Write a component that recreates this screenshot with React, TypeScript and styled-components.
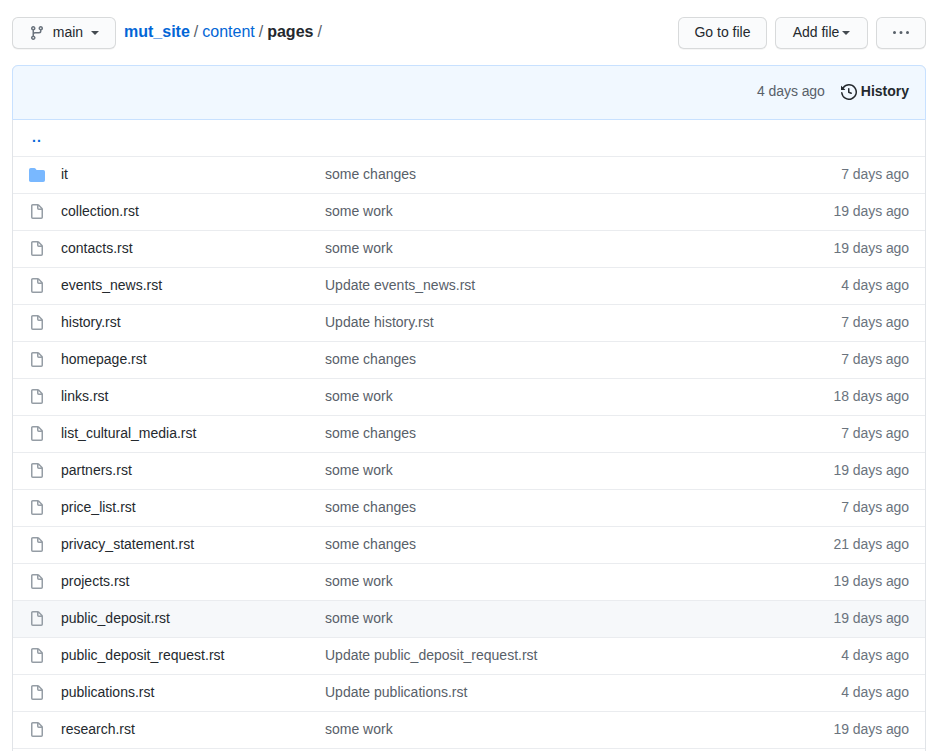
import React from "react";
import styled, { createGlobalStyle } from "styled-components";

const GlobalStyle = createGlobalStyle`
  * { box-sizing: border-box; }
  body {
    margin: 0;
    background: #fff;
    color: #24292e;
    font: 14px/20px "Liberation Sans", Arial, sans-serif;
    overflow: hidden;
  }
`;

const Page = styled.main`
  width: 938px;
  height: 751px;
  padding: 17px 12px 0;
  overflow: hidden;
`;

const Toolbar = styled.div`
  display: flex;
  height: 32px;
  margin-bottom: 16px;
`;

const Button = styled.button<{ $width: number }>`
  display: flex;
  align-items: center;
  justify-content: center;
  width: ${(p) => p.$width}px;
  height: 32px;
  padding: 0 0 2px;
  font: inherit;
  color: #24292e;
  background: #fafbfc;
  border: 1px solid rgba(27, 31, 35, 0.15);
  border-radius: 6px;
  box-shadow: 0 1px 0 rgba(27, 31, 35, 0.04), inset 0 1px 0 rgba(255, 255, 255, 0.25);
`;

const Actions = styled.div`
  display: flex;
  gap: 8px;
  margin-left: auto;
`;

const Caret = styled.span<{ $gap: number }>`
  margin: 2px 0 0 ${(p) => p.$gap}px;
  border: 4px solid transparent;
  border-top-color: #444a50;
  border-bottom-width: 0;
`;

const Breadcrumb = styled.nav`
  margin: 3px 0 0 8px;
  font-size: 16px;
  line-height: 24px;
  white-space: pre;
`;

const Link = styled.a<{ $bold?: boolean }>`
  color: #0366d6;
  font-weight: ${(p) => (p.$bold ? 700 : 400)};
`;

const Separator = styled.span`
  margin: 0 4px;
  color: #586069;
`;

const Icon = styled.svg<{ $color: string }>`
  display: block;
  flex: none;
  fill: ${(p) => p.$color};
`;

const BranchIcon = styled(Icon)`
  margin: 2px 8px 0 0;
`;

const DotsIcon = styled(Icon)`
  margin-top: 2px;
`;

const FileBox = styled.section`
  border: 1px solid #e1e4e8;
  border-top: 0;
  border-radius: 6px;
`;

const CommitBar = styled.header`
  display: flex;
  align-items: center;
  justify-content: flex-end;
  height: 55px;
  margin: 0 -1px;
  padding: 0 16px 4px;
  color: #586069;
  background: #f1f8ff;
  border: 1px solid #c8e1ff;
  border-radius: 6px 6px 0 0;
`;

const CommitAge = styled.time`
  letter-spacing: -0.08px;
`;

const History = styled.a`
  display: flex;
  align-items: center;
  gap: 4px;
  margin-left: 16px;
  color: #24292e;
  font-weight: 700;
`;

const HistoryIcon = styled(Icon)`
  margin-top: 2px;
`;

const ParentRow = styled.div`
  height: 36px;
  padding: 7px 19px;
  color: #0366d6;
  font-weight: 700;
  letter-spacing: 1px;
`;

const Row = styled.div<{ $active?: boolean }>`
  display: grid;
  grid-template-columns: 16px 248px 1fr auto;
  column-gap: 16px;
  height: 37px;
  padding: 7px 16px 0;
  border-top: 1px solid #eaecef;
  background: ${(p) => (p.$active ? "#f6f8fa" : "#fff")};
`;

const RowIcon = styled(Icon)`
  margin-top: 3px;
`;

const Name = styled.span`
  color: #24292e;
`;

const Message = styled.span`
  color: #586069;
`;

const Age = styled.time`
  color: #6a737d;
  letter-spacing: -0.08px;
`;

const paths = {
  branch:
    "M11.75 2.5a.75.75 0 100 1.5.75.75 0 000-1.5zm-2.25.75a2.25 2.25 0 113 2.122V6A2.5 2.5 0 0110 8.5H6a1 1 0 00-1 1v1.128a2.251 2.251 0 11-1.5 0V5.372a2.25 2.25 0 111.5 0v1.836A2.492 2.492 0 016 7h4a1 1 0 001-1v-.628A2.25 2.25 0 019.5 3.25zM4.25 12a.75.75 0 100 1.5.75.75 0 000-1.5zM3.5 3.25a.75.75 0 111.5 0 .75.75 0 01-1.5 0z",
  file:
    "M3.75 1.5a.25.25 0 00-.25.25v11.5c0 .138.112.25.25.25h8.5a.25.25 0 00.25-.25V6H9.75A1.75 1.75 0 018 4.25V1.5H3.75zm5.75.56v2.19c0 .138.112.25.25.25h2.19L9.5 2.06zM2 1.75C2 .784 2.784 0 3.75 0h5.086c.464 0 .909.184 1.237.513l3.414 3.414c.329.328.513.773.513 1.237v8.086A1.75 1.75 0 0112.25 15h-8.5A1.75 1.75 0 012 13.25V1.75z",
  folder:
    "M1.75 1A1.75 1.75 0 000 2.75v10.5C0 14.216.784 15 1.75 15h12.5A1.75 1.75 0 0016 13.25v-8.5A1.75 1.75 0 0014.25 3h-6.5a.25.25 0 01-.2-.1l-.9-1.2c-.33-.44-.85-.7-1.4-.7h-3.5z",
  history:
    "M1.643 3.143L.427 1.927A.25.25 0 000 2.104V5.75c0 .138.112.25.25.25h3.646a.25.25 0 00.177-.427L2.715 4.215a6.5 6.5 0 11-1.18 4.458.75.75 0 10-1.493.154 8.001 8.001 0 101.6-5.684zM7.75 4a.75.75 0 01.75.75v2.992l2.028.812a.75.75 0 01-.557 1.392l-2.5-1A.75.75 0 017 8.25v-3.5A.75.75 0 017.75 4z",
  dots:
    "M8 9a1.5 1.5 0 100-3 1.5 1.5 0 000 3zM1.5 9a1.5 1.5 0 100-3 1.5 1.5 0 000 3zm13 0a1.5 1.5 0 100-3 1.5 1.5 0 000 3z",
};

type Entry = { name: string; message: string; age: string; folder?: boolean; active?: boolean };

const entries: Entry[] = [
  { name: "it", message: "some changes", age: "7 days ago", folder: true },
  { name: "collection.rst", message: "some work", age: "19 days ago" },
  { name: "contacts.rst", message: "some work", age: "19 days ago" },
  { name: "events_news.rst", message: "Update events_news.rst", age: "4 days ago" },
  { name: "history.rst", message: "Update history.rst", age: "7 days ago" },
  { name: "homepage.rst", message: "some changes", age: "7 days ago" },
  { name: "links.rst", message: "some work", age: "18 days ago" },
  { name: "list_cultural_media.rst", message: "some changes", age: "7 days ago" },
  { name: "partners.rst", message: "some work", age: "19 days ago" },
  { name: "price_list.rst", message: "some changes", age: "7 days ago" },
  { name: "privacy_statement.rst", message: "some changes", age: "21 days ago" },
  { name: "projects.rst", message: "some work", age: "19 days ago" },
  { name: "public_deposit.rst", message: "some work", age: "19 days ago", active: true },
  { name: "public_deposit_request.rst", message: "Update public_deposit_request.rst", age: "4 days ago" },
  { name: "publications.rst", message: "Update publications.rst", age: "4 days ago" },
  { name: "research.rst", message: "some work", age: "19 days ago" },
];

export default function App() {
  return (
    <Page>
      <GlobalStyle />
      <Toolbar>
        <Button $width={104}>
          <BranchIcon $color="#6a737d" width="16" height="16" viewBox="0 0 16 16">
            <path fillRule="evenodd" d={paths.branch} />
          </BranchIcon>
          main
          <Caret $gap={8} />
        </Button>
        <Breadcrumb>
          <Link $bold>mut_site</Link>
          <Separator>/</Separator>
          <Link>content</Link>
          <Separator>/</Separator>
          <strong>pages</strong>
          <Separator>/</Separator>
        </Breadcrumb>
        <Actions>
          <Button $width={89}>Go to file</Button>
          <Button $width={93}>
            Add file
            <Caret $gap={3} />
          </Button>
          <Button $width={50} aria-label="More options">
            <DotsIcon $color="#586069" width="16" height="16" viewBox="0 0 16 16">
              <path d={paths.dots} />
            </DotsIcon>
          </Button>
        </Actions>
      </Toolbar>
      <FileBox>
        <CommitBar>
          <CommitAge>4 days ago</CommitAge>
          <History>
            <HistoryIcon $color="#24292e" width="16" height="16" viewBox="0 0 16 16">
              <path fillRule="evenodd" d={paths.history} />
            </HistoryIcon>
            History
          </History>
        </CommitBar>
        <ParentRow>..</ParentRow>
        {entries.map((entry) => (
          <Row key={entry.name} $active={entry.active}>
            <RowIcon $color={entry.folder ? "#79b8ff" : "#959da5"} width="16" height="16" viewBox="0 0 16 16">
              <path fillRule="evenodd" d={entry.folder ? paths.folder : paths.file} />
            </RowIcon>
            <Name>{entry.name}</Name>
            <Message>{entry.message}</Message>
            <Age>{entry.age}</Age>
          </Row>
        ))}
        <Row />
      </FileBox>
    </Page>
  );
}
